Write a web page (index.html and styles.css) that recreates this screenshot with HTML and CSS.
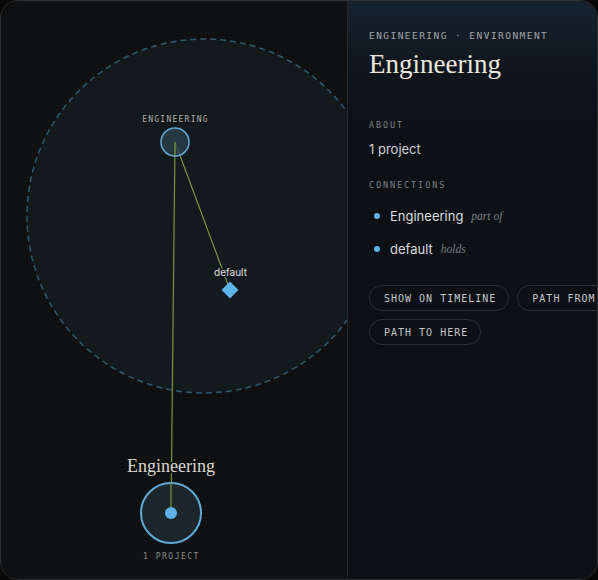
FILE: index.html
```html
<!DOCTYPE html>
<html>
<head>
<meta charset="utf-8">
<link rel="stylesheet" href="styles.css">
</head>
<body>
<div class="frame">
  <div class="canvas">
    <svg class="graph" width="346" height="578" viewBox="1 1 346 578" xmlns="http://www.w3.org/2000/svg">
      <circle cx="204" cy="216" r="177" fill="#131a1e" stroke="#2f5a6e" stroke-width="1.5" stroke-dasharray="6 4"/>
      <line x1="175" y1="142" x2="230" y2="290" stroke="#7a9439" stroke-width="1.2"/>
      <line x1="175" y1="142" x2="171" y2="513" stroke="#7a9439" stroke-width="1.2"/>
      <circle cx="175" cy="142" r="14" fill="#2b3f4a" fill-opacity="0.8" stroke="#62aad6" stroke-width="1.5"/>
      <line x1="175" y1="142" x2="175" y2="156" stroke="#7a9439" stroke-width="1.2"/>
      <text class="t-mono-s" x="175.5" y="122" text-anchor="middle">ENGINEERING</text>
      <rect x="224" y="284" width="12" height="12" fill="#5eb2e8" transform="rotate(45 230 290)"/>
      <text class="t-def" x="230.5" y="276" text-anchor="middle">default</text>
      <circle cx="171" cy="513" r="30" fill="#1c262c" stroke="#62aad6" stroke-width="2"/>
      <line x1="171" y1="483" x2="171" y2="513" stroke="#7a9439" stroke-width="1.2"/>
      <circle cx="171" cy="513" r="6" fill="#5eb2e8"/>
      <text class="t-serif" x="171" y="472" text-anchor="middle">Engineering</text>
      <text class="t-mono-p" x="171.5" y="559" text-anchor="middle">1 PROJECT</text>
    </svg>
  </div>
  <div class="panel">
    <div class="crumb">ENGINEERING · ENVIRONMENT</div>
    <h1 class="title">Engineering</h1>
    <div class="section-label about">ABOUT</div>
    <div class="about-text">1 project</div>
    <div class="section-label conn">CONNECTIONS</div>
    <ul class="conns">
      <li class="conn-item"><span class="dot"></span><span class="conn-name">Engineering</span><span class="conn-rel">part of</span></li>
      <li class="conn-item"><span class="dot"></span><span class="conn-name">default</span><span class="conn-rel">holds</span></li>
    </ul>
    <div class="actions">
      <button class="pill">SHOW ON TIMELINE</button>
      <button class="pill">PATH FROM HERE</button>
      <button class="pill">PATH TO HERE</button>
    </div>
  </div>
</div>
</body>
</html>
```
FILE: styles.css
```css
html, body {
  margin: 0;
  padding: 0;
  background: #080808;
}
.frame {
  box-sizing: border-box;
  width: 598px;
  height: 580px;
  border: 1px solid #2e3032;
  border-radius: 18px;
  overflow: hidden;
  display: flex;
  background: #0e0f10;
}
.canvas {
  width: 346px;
  flex-shrink: 0;
  height: 100%;
  border-right: 1px solid #24292f;
  background-color: #0e0f10;
  background-image:
    linear-gradient(rgba(255,255,255,0.012) 1px, transparent 1px),
    linear-gradient(90deg, rgba(255,255,255,0.012) 1px, transparent 1px);
  background-size: 4px 4px;
}
.graph {
  display: block;
}
.t-mono-s {
  font-family: "DejaVu Sans Mono", monospace;
  font-size: 8px;
  letter-spacing: 1.25px;
  fill: #b4b4b0;
  paint-order: stroke;
  stroke: #101518;
  stroke-width: 3px;
}
.t-def {
  font-family: Inter, "Noto Sans", sans-serif;
  font-size: 10px;
  fill: #e2e2e2;
  paint-order: stroke;
  stroke: #111619;
  stroke-width: 3px;
}
.t-serif {
  font-family: "Liberation Serif", serif;
  font-size: 18px;
  fill: #dcd8cf;
  paint-order: stroke;
  stroke: #0e0f10;
  stroke-width: 3px;
}
.t-mono-p {
  font-family: "DejaVu Sans Mono", monospace;
  font-size: 8px;
  letter-spacing: 1.5px;
  fill: #8a8a88;
}
.panel {
  width: 320px;
  flex-shrink: 0;
  box-sizing: border-box;
  padding: 29px 21px 0 21px;
  background: linear-gradient(180deg, #172330 0px, #0f151c 70px, #0d1116 130px, #0d1116 100%);
}
.crumb {
  font-family: "DejaVu Sans Mono", monospace;
  font-size: 9.5px;
  line-height: 12px;
  letter-spacing: 1.45px;
  color: #a3a7aa;
}
.title {
  margin: 6px 0 0 0;
  font-family: "Liberation Serif", serif;
  font-weight: normal;
  font-size: 27px;
  line-height: 32px;
  color: #ebe7de;
}
.section-label {
  font-family: "DejaVu Sans Mono", monospace;
  font-size: 8.5px;
  line-height: 12px;
  letter-spacing: 1.9px;
  color: #7d8184;
}
.about {
  margin-top: 39px;
}
.about-text {
  margin-top: 9px;
  font-family: Inter, "Noto Sans", sans-serif;
  font-size: 13px;
  line-height: 18px;
  color: #cfd2d4;
}
.conn {
  margin-top: 21px;
}
.conns {
  list-style: none;
  margin: 15px 0 0 0;
  padding: 0;
  display: flex;
  flex-direction: column;
  gap: 13px;
}
.conn-item {
  display: flex;
  align-items: center;
  height: 20px;
}
.dot {
  width: 6px;
  height: 6px;
  border-radius: 50%;
  background: #5eb2e8;
  margin-left: 5px;
  margin-right: 10px;
}
.conn-name {
  font-family: Inter, "Noto Sans", sans-serif;
  font-size: 13px;
  color: #d9dcde;
}
.conn-rel {
  margin-left: 8px;
  font-family: "Liberation Serif", serif;
  font-style: italic;
  font-size: 11.5px;
  color: #7a7e80;
}
.actions {
  margin-top: 26px;
  display: flex;
  flex-wrap: wrap;
  gap: 8px;
}
.pill {
  height: 26px;
  box-sizing: border-box;
  padding: 0 12px 0 14px;
  border: 1px solid #2b3035;
  border-radius: 13px;
  background: transparent;
  font-family: "DejaVu Sans Mono", monospace;
  font-size: 10px;
  letter-spacing: 1px;
  color: #c4c7c9;
  white-space: nowrap;
}
```
